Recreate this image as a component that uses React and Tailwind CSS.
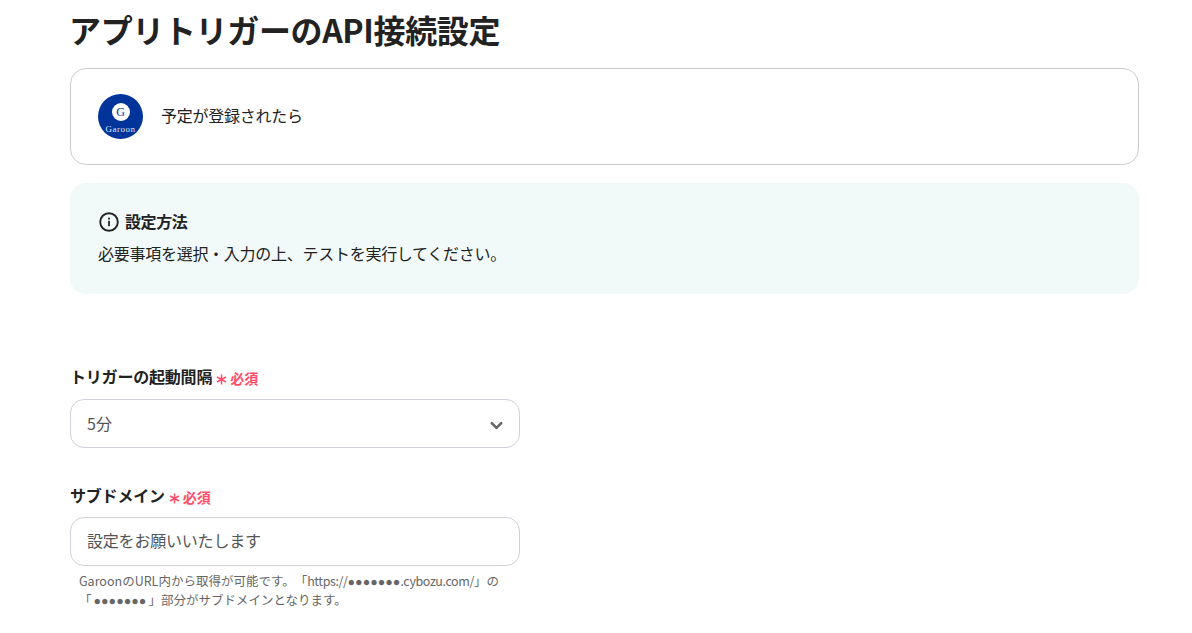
import React from 'react';
import { ChevronDown } from 'lucide-react';

const fontStack = "font-['Noto_Sans_CJK_JP','Noto_Sans',sans-serif]";

const GaroonLogo = () => (
    <div className="w-[45px] h-[45px] rounded-full bg-[#00349a] flex flex-col items-center shrink-0">
        <div className="w-[18px] h-[18px] mt-[9px] rounded-full bg-white flex items-center justify-center text-[#00349a] text-xs leading-none font-['Liberation_Serif',serif]">
            G
        </div>
        <div className="mt-[3px] text-[#dfe6f5] text-[9px] leading-[10px] tracking-[0.5px] font-['Liberation_Serif',serif]">Garoon</div>
    </div>
);

const InfoIcon = () => (
    <svg width="20" height="20" viewBox="0 0 20 20" fill="none" className="shrink-0 mt-px">
        <circle cx="10" cy="10" r="8.8" stroke="#222222" strokeWidth="1.9" />
        <rect x="9.1" y="8.8" width="1.8" height="5.4" fill="#222222" />
        <rect x="9.1" y="5.6" width="1.8" height="1.9" fill="#222222" />
    </svg>
);

const FieldLabel = ({ children }) => (
    <div className="flex items-center h-5 -mt-[2px]">
        <span className="text-base font-bold text-[#222222] leading-5 tracking-[-0.2px]">{children}</span>
        <span className="ml-[4px] mt-[3px] text-[#ff4d6a] text-sm font-bold leading-5 flex items-center">
            <svg width="11" height="11" viewBox="0 0 11 11" className="mr-[3px] mt-[3px]" stroke="#ff4d6a" strokeWidth="1.5">
                <path d="M5.5 0.5V10.5M1 3L10 8M10 3L1 8" />
            </svg>
            必須
        </span>
    </div>
);

const Dots = () => <span className="font-['Liberation_Sans',sans-serif]">●●●●●●●</span>;

export default function App() {
    return (
        <div className={`${fontStack} bg-white w-[1192px] h-[633px] overflow-hidden pl-[70px] pr-[53px] text-[#222222]`}>
            <h1 className="h-[68px] pt-[7px] text-[32px] leading-[45px] font-bold tracking-[-0.35px] -ml-px">アプリトリガーのAPI接続設定</h1>

            <div className="h-[97px] border border-[#cccccc] rounded-2xl flex items-center pl-[27px] gap-[18px]">
                <GaroonLogo />
                <span className="text-base leading-6 tracking-[-0.25px] -mt-1">予定が登録されたら</span>
            </div>

            <div className="mt-[18px] h-[111px] bg-[#f1faf9] rounded-2xl pl-7 pt-[27px]">
                <div className="flex items-center gap-[6px] h-[22px] pl-px">
                    <InfoIcon />
                    <span className="text-base font-bold leading-[22px] tracking-[-0.4px]">設定方法</span>
                </div>
                <p className="mt-[10px] text-base leading-[22px] tracking-[-0.27px]">必要事項を選択・入力の上、テストを実行してください。</p>
            </div>

            <div className="w-[450px] mt-[74px]">
                <FieldLabel>トリガーの起動間隔</FieldLabel>
                <div className="mt-[13px] h-[49px] border border-[#cfd2da] rounded-[14px] flex items-center justify-between pl-4 pr-[13px] text-base text-[#555555]">
                    <span className="-mt-0.5">5分</span>
                    <ChevronDown size={19} strokeWidth={3.2} className="text-[#666666] mt-[3px]" />
                </div>

                <div className="mt-[39px]">
                    <FieldLabel>サブドメイン</FieldLabel>
                </div>
                <div className="mt-[12px] h-[49px] border border-[#cfd2da] rounded-[14px] flex items-center pl-4 text-base text-[#555555] tracking-[-0.2px]">
                    <span className="-mt-1">設定をお願いいたします</span>
                </div>
                <p className="mt-[6px] pl-[9px] text-[12.5px] leading-[18px] text-[#666666] [text-spacing-trim:space-all] whitespace-nowrap">
                    GaroonのURL内から取得が可能です。「<span className="tracking-[-0.4px]">https://</span><Dots /><span className="tracking-[-0.4px]">.cybozu.com/</span>」の
                    <br />
                    「<span className="ml-[2px] mr-[2px]"><Dots /></span>」部分がサブドメインとなります。
                </p>
            </div>
        </div>
    );
}
